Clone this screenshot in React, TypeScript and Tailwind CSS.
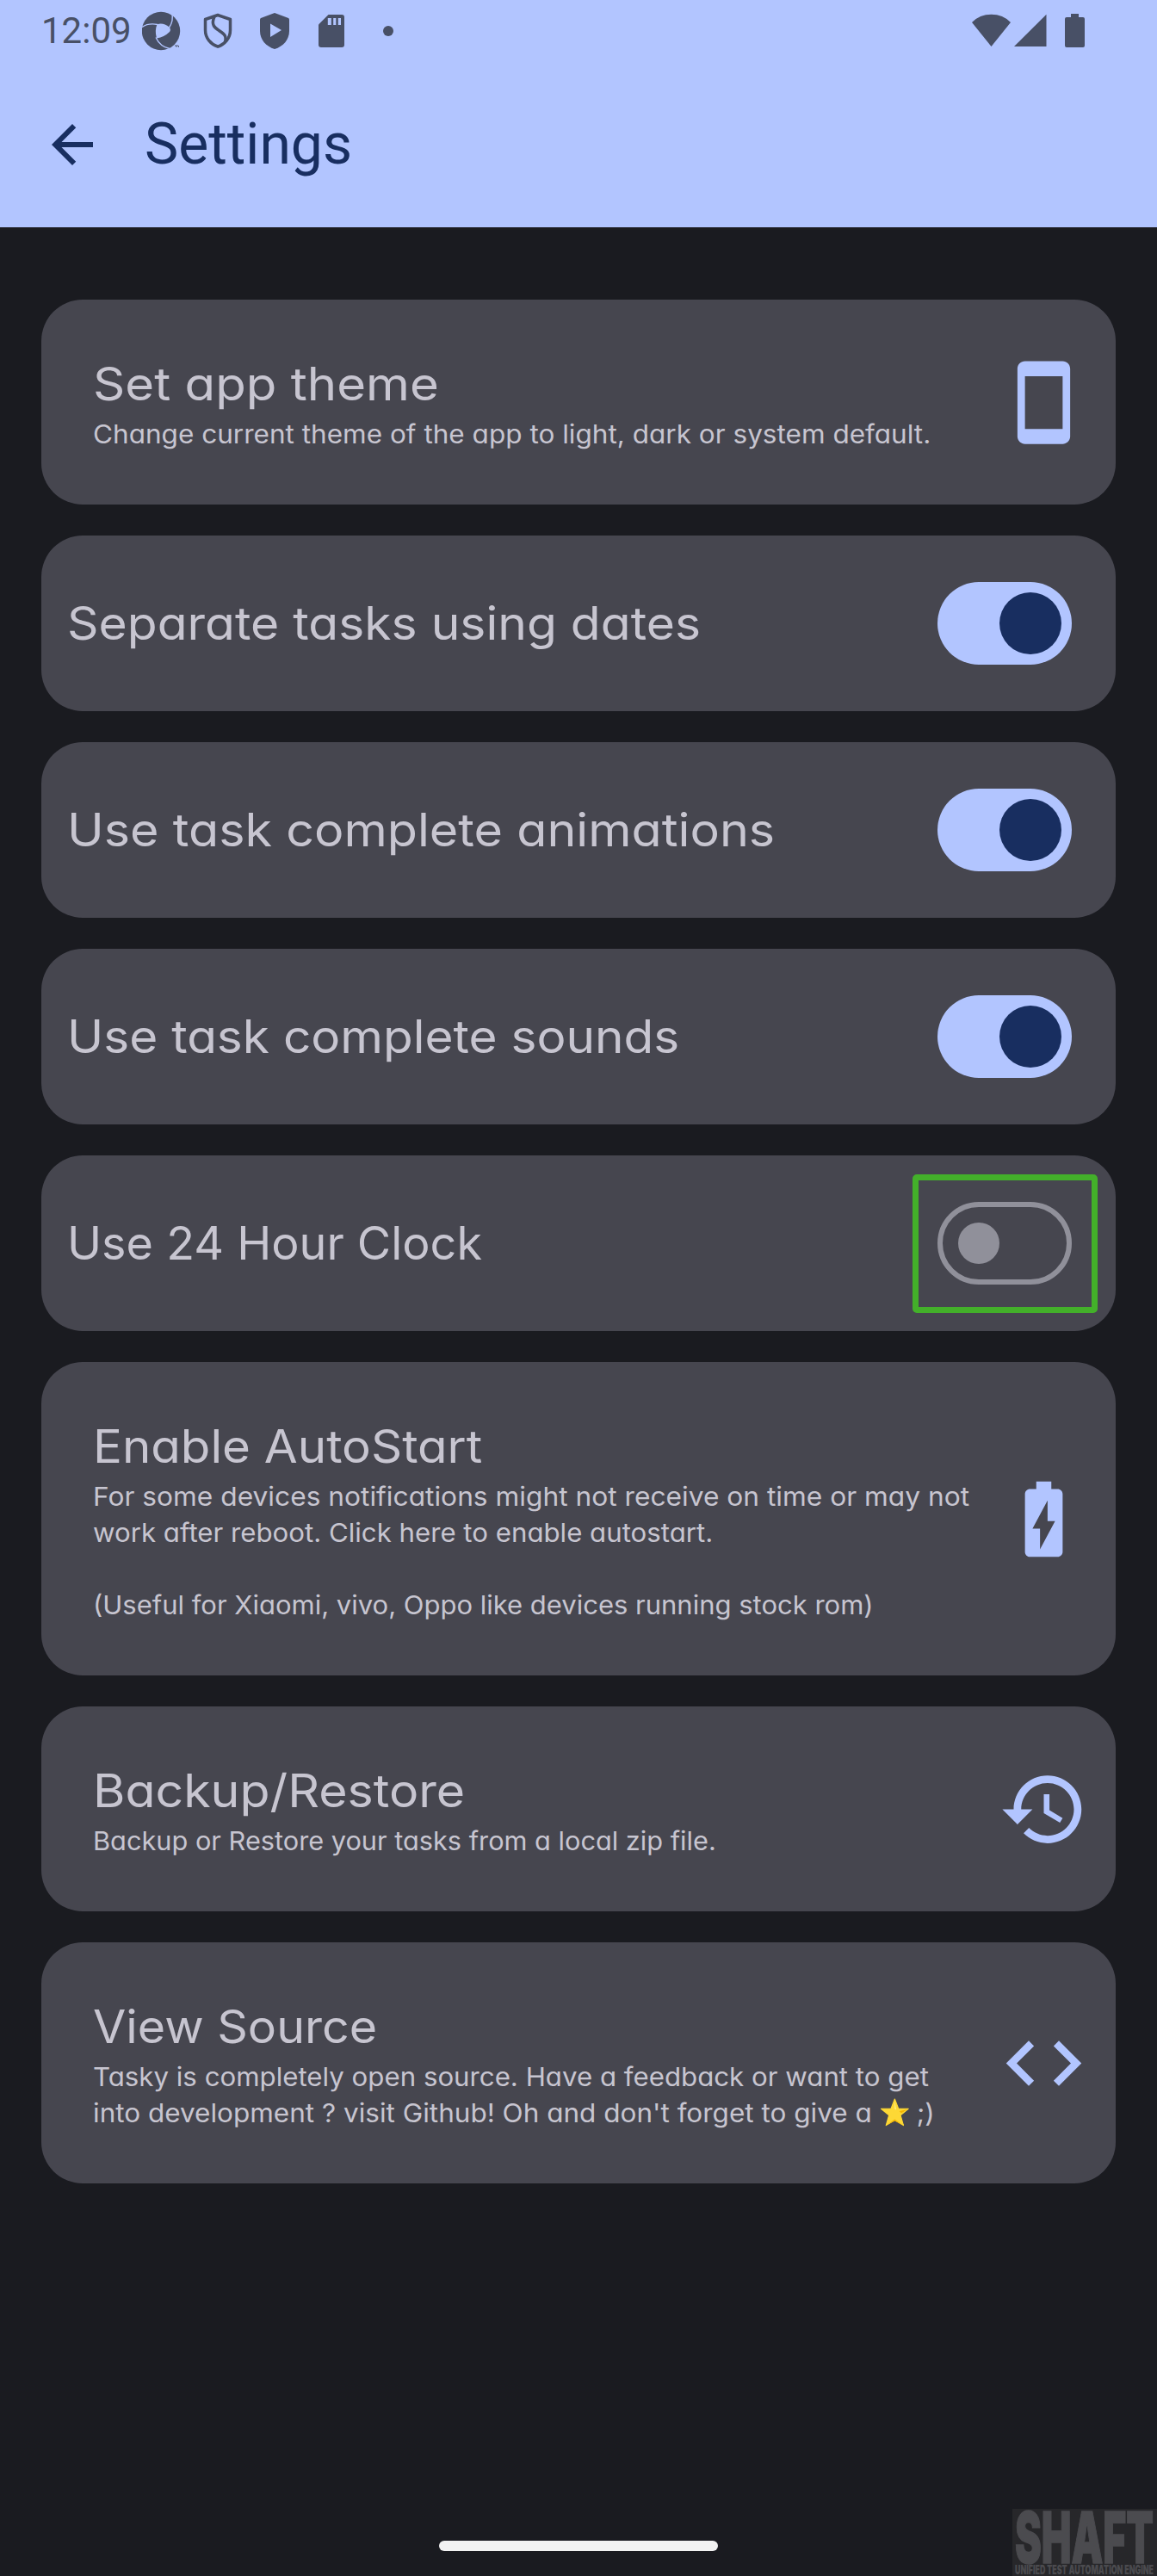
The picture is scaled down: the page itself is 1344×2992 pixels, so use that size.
import type { ReactNode } from 'react';

type IconProps = { d: string; className: string };

function MaterialIcon({ d, className }: IconProps) {
  return (
    <svg viewBox="0 0 24 24" fill="currentColor" className={className} aria-hidden="true">
      <path d={d} />
    </svg>
  );
}

const icons = {
  back: 'M20 11H7.83l5.59-5.59L12 4l-8 8 8 8 1.41-1.41L7.83 13H20v-2z',
  phone:
    'M17 1.01L7 1c-1.1 0-2 .9-2 2v18c0 1.1.9 2 2 2h10c1.1 0 2-.9 2-2V3c0-1.1-.9-1.99-2-1.99zM17 19H7V5h10v14z',
  battery:
    'M15.67 4H14V2h-4v2H8.33C7.6 4 7 4.6 7 5.33v15.33C7 21.4 7.6 22 8.33 22h7.33c.74 0 1.34-.6 1.34-1.33V5.33C17 4.6 16.4 4 15.67 4zM11 20v-5.5H9L13 7v5.5h2L11 20z',
  history:
    'M13 3c-4.97 0-9 4.03-9 9H1l3.89 3.89.07.14L9 12H6c0-3.87 3.13-7 7-7s7 3.13 7 7-3.13 7-7 7c-1.93 0-3.68-.79-4.94-2.06l-1.42 1.42C8.27 19.99 10.51 21 13 21c4.97 0 9-4.03 9-9s-4.03-9-9-9zm-1 5v5l4.28 2.54.72-1.21-3.5-2.08V8H12z',
  code: 'M9.4 16.6L4.8 12l4.6-4.6L8 6l-6 6 6 6 1.4-1.4zm5.2 0l4.6-4.6-4.6-4.6L16 6l6 6-6 6-1.4-1.4z',
};

function StatusBar() {
  return (
    <div className="flex h-[72px] items-start justify-between pl-12 text-[#485066]">
      <div className="flex items-start">
        <span className="mt-3 w-[117px] text-[42px] leading-[48px]">12:09</span>
        <svg className="mt-[13px] h-[47px] w-[46px]" viewBox="0 0 46 47" aria-hidden="true">
          <circle cx="22" cy="23" r="22.2" fill="currentColor" />
          <g fill="none" stroke="#b2c5ff" strokeWidth="1.4">
            <path d="M0 18.500C5 15 10 14 18 15.500" />
            <path d="M31.500 19C35 14 36 7 34.500 1" />
            <path d="M16 30.500C19 37 25 42 32 43.500" />
          </g>
          <path
            d="M17.500 15.200Q25 13 31.500 18.500Q34 21 32 24Q26 30 17 31.500Q14.500 22 17.500 15.200Z"
            fill="#b2c5ff"
          />
          <path d="M38 40h4M40 40v1.800M42.500 40v1.800" stroke="currentColor" strokeWidth="0.900" />
        </svg>
        <svg className="ml-[25px] mt-[15px] h-[42px] w-[34px]" viewBox="0 0 34 42" fill="none" stroke="currentColor" strokeWidth="3.500" aria-hidden="true">
          <path d="M17 2.500L31.500 7.500V20C31.500 29.500 25 36.500 17 39.200C9 36.500 2.500 29.500 2.500 20V7.500Z" strokeLinejoin="round" />
          <path d="M13 4.500C8.500 14 14 17.500 18.500 20.500C24.500 24.500 27.500 27 25.500 33.500" />
        </svg>
        <svg className="ml-8 mt-[14px] h-[44px] w-[34px]" viewBox="0 0 34 44" aria-hidden="true">
          <path
            d="M17 1L33 7Q34 7.500 34 9V22C34 32 27 40 17 43C7 40 0 32 0 22V9Q0 7.500 1 7Z"
            fill="currentColor"
          />
          <path d="M12 13.500V29L25 21Z" fill="#b2c5ff" />
        </svg>
        <svg className="ml-[34px] mt-[17px] h-[38px] w-[30px]" viewBox="0 0 30 38" aria-hidden="true">
          <path d="M11.500 0H27Q30 0 30 3V35Q30 38 27 38H3Q0 38 0 35V11.500Z" fill="currentColor" />
          <path d="M10.800 4H14.800V12H10.800ZM17.200 4H20.300V12H17.200ZM22.800 4H26V12H22.800Z" fill="#b2c5ff" />
        </svg>
        <span className="ml-[45px] mt-[30px] size-3 rounded-full bg-current" />
      </div>
      <div className="mr-[84px] mt-4 flex items-start">
        <svg className="h-[39px] w-[45px]" viewBox="0 0 45 39" fill="currentColor" aria-hidden="true">
          <path d="M0 10Q9 .8 22.500 .8T45 10L22.500 38Z" />
        </svg>
        <svg className="ml-1 h-[39px] w-[38px]" viewBox="0 0 38 39" fill="currentColor" aria-hidden="true">
          <path d="M37.500 .8V38H0Z" />
        </svg>
        <svg className="ml-[21px] h-[39px] w-[23px]" viewBox="0 0 23 39" fill="currentColor" aria-hidden="true">
          <path d="M7 0H16V4H21Q23 4 23 6V37Q23 39 21 39H2Q0 39 0 37V6Q0 4 2 4H7Z" />
        </svg>
      </div>
    </div>
  );
}

const titleClass =
  "origin-left font-['Inter',sans-serif] text-[53px] leading-[64px] whitespace-nowrap [font-feature-settings:'cv11']";

function Card({ children, className }: { children: ReactNode; className: string }) {
  return <section className={`flex rounded-[48px] bg-[#46464f] text-[#c7c5d0] ${className}`}>{children}</section>;
}

function InfoCard({
  title,
  stretch,
  icon,
  children,
}: {
  title: string;
  stretch: string;
  icon: string;
  children: ReactNode;
}) {
  return (
    <Card className="items-center justify-between pr-[31px] pl-[60px]">
      <div className="pt-[66px] pb-[61px]">
        <h2 className={`${titleClass} w-fit ${stretch}`}>{title}</h2>
        <div className="mt-[5px] font-['Inter',sans-serif] text-[30px] leading-[42px] whitespace-pre [font-feature-settings:'cv11'] *:w-fit *:origin-left">
          {children}
        </div>
      </div>
      <MaterialIcon d={icon} className="size-[105px] shrink-0 text-[#b2c5ff]" />
    </Card>
  );
}

function ToggleCard({
  title,
  stretch,
  on = false,
  highlighted = false,
}: {
  title: string;
  stretch: string;
  on?: boolean;
  highlighted?: boolean;
}) {
  return (
    <Card className="h-[204px] items-center justify-between pr-[51px] pl-[30px]">
      <h2 className={`${titleClass} ${stretch}`}>{title}</h2>
      <div className="relative">
        {on ? (
          <div className="flex h-24 w-[156px] items-center justify-end rounded-full bg-[#b2c5ff] pr-3">
            <span className="size-[72px] rounded-full bg-[#182e60]" />
          </div>
        ) : (
          <div className="flex h-24 w-[156px] items-center rounded-full border-[6px] border-[#90909a] pl-[18px]">
            <span className="size-12 rounded-full bg-[#90909a]" />
          </div>
        )}
        {highlighted && (
          <span className="absolute -top-8 -left-[29px] h-[161px] w-[215px] rounded-[5px] border-[7px] border-[#43b02a]" />
        )}
      </div>
    </Card>
  );
}

function Star() {
  return (
    <svg className="ml-[9px] inline-block h-[33px] w-[32px] align-[-5px]" viewBox="0 0 34 33" preserveAspectRatio="none" aria-hidden="true">
      <path
        d="M17 1L21.300 12L33 12.400L23.800 19.800L27.200 31.600L17 25.600L6.800 31.600L10.200 19.800L1 12.400L12.700 12Z"
        fill="#fdd835"
        stroke="#fdd835"
        strokeWidth="1.200"
        strokeLinejoin="round"
      />
      <path d="M17 2.500L18.500 13.500L17 12.500Z" fill="#fff59d" />
      <path d="M32 13L22.500 15L24.500 17.500Z" fill="#f4b400" />
      <path d="M8 31L17 24.500L26 31L17 26.500Z" fill="#f4b400" />
    </svg>
  );
}

function Watermark() {
  return (
    <svg
      className="absolute right-0 bottom-0 h-[78px] w-[168px] bg-[#27272a] font-['Inter',sans-serif]"
      viewBox="0 0 168 78"
      fill="#4b4b4f"
      aria-label="SHAFT Unified Test Automation Engine"
    >
      <text x="3" y="63" fontSize="83" fontWeight="900" stroke="#4b4b4f" strokeWidth="1.500" textLength="161" lengthAdjust="spacingAndGlyphs">
        SHAFT
      </text>
      <text x="3" y="76" fontSize="14.500" fontWeight="900" textLength="161" lengthAdjust="spacingAndGlyphs">
        UNIFIED TEST AUTOMATION ENGINE
      </text>
    </svg>
  );
}

export default function App() {
  return (
    <div className="relative flex h-[2992px] w-[1344px] flex-col overflow-hidden bg-[#1a1b20] font-['Roboto',sans-serif]">
      <header className="h-[264px] bg-[#b2c5ff] text-[#182e60]">
        <StatusBar />
        <div className="flex h-48 items-center pl-12">
          <MaterialIcon d={icons.back} className="size-[72px]" />
          <h1 className="ml-12 text-[66px] leading-[84px]">Settings</h1>
        </div>
      </header>

      <main className="flex flex-col gap-9 px-12 pt-[84px]">
        <InfoCard title="Set app theme" stretch="scale-x-[1.097]" icon={icons.phone}>
          <p className="scale-x-[1.051]">Change current theme of the app to light, dark or system default.</p>
        </InfoCard>
        <ToggleCard title="Separate tasks using dates" stretch="scale-x-[1.075]" on />
        <ToggleCard title="Use task complete animations" stretch="scale-x-[1.084]" on />
        <ToggleCard title="Use task complete sounds" stretch="scale-x-[1.07]" on />
        <ToggleCard title="Use 24 Hour Clock" stretch="scale-x-[1.017]" highlighted />
        <InfoCard title="Enable AutoStart" stretch="scale-x-[1.065]" icon={icons.battery}>
          <p className="scale-x-[1.057]">For some devices notifications might not receive on time or may not</p>
          <p className="scale-x-[1.04]">work after reboot. Click here to enable autostart.</p>
          <p className="mt-[42px] scale-x-[1.033]">(Useful for Xiaomi, vivo, Oppo like devices running stock rom)</p>
        </InfoCard>
        <InfoCard title="Backup/Restore" stretch="scale-x-[1.08]" icon={icons.history}>
          <p className="scale-x-[1.024]">Backup or Restore your tasks from a local zip file.</p>
        </InfoCard>
        <InfoCard title="View Source" stretch="scale-x-[1.048]" icon={icons.code}>
          <p className="scale-x-[1.041]">Tasky is completely open source. Have a feedback or want to get</p>
          <p className="h-[42px] scale-x-[1.05]">
            into development ? visit Github! Oh and don't forget to give a
            <Star />
            {' ;)'}
          </p>
        </InfoCard>
      </main>

      <div className="mt-auto mb-[29px] h-3 w-[324px] self-center rounded-full bg-[#f2f2f2]" />
      <Watermark />
    </div>
  );
}
